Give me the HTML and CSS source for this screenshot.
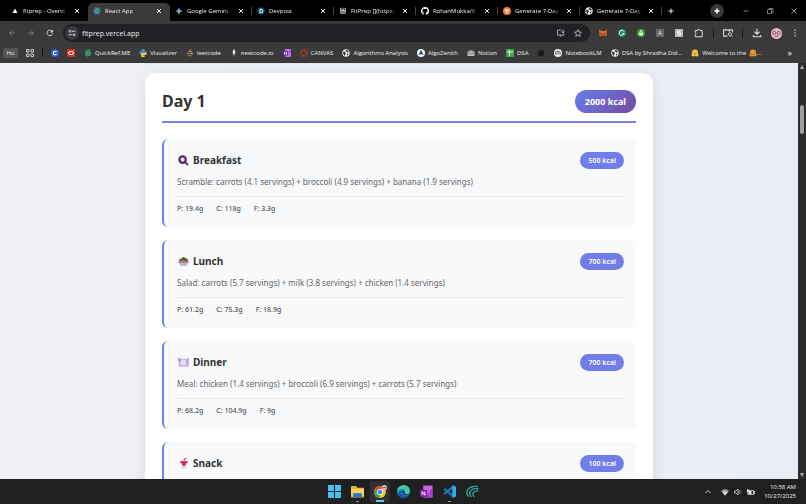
FILE: index.html
```html
<!DOCTYPE html>
<html lang="en">
<head>
    <meta charset="UTF-8">
    <meta name="viewport" content="width=device-width, initial-scale=1.0">
    <title>React App</title>
    <link rel="stylesheet" href="styles.css">
</head>
<body>
<!-- shared icons -->
<svg class="sprite" aria-hidden="true">
    <symbol id="close" viewBox="0 0 8 8"><path d="M2 2l4 4M6 2l-4 4" stroke="currentColor" stroke-width="1"/></symbol>
    <symbol id="globe" viewBox="0 0 16 16">
        <circle cx="8" cy="8" r="7.5" fill="#e4e6e8"/>
        <path d="M2 5l4 1 2 3-2 2v3l-3-3zM8 2l4 1 2 3-3 1-2-2-2 0z" fill="#303338"/><path d="M10 10l3-1-1 3-2 1z" fill="#303338"/>
    </symbol>
</svg>

<header class="browser">
    <nav class="tabs" aria-label="Tabs">
        <div class="tab">
            <svg class="icon" viewBox="0 0 16 16"><path d="M8 3l5 9H3z" fill="#fff"/></svg>
            <a href="#">fitprep - Overvi</a>
            <button aria-label="Close"><svg viewBox="0 0 8 8"><use href="#close"/></svg></button>
        </div>
        <div class="tab active">
            <svg class="icon" viewBox="0 0 16 16"><g fill="none" stroke="#59b8d2" stroke-width="1.1"><ellipse cx="8" cy="8" rx="7.2" ry="2.8"/><ellipse cx="8" cy="8" rx="7.2" ry="2.8" transform="rotate(60 8 8)"/><ellipse cx="8" cy="8" rx="7.2" ry="2.8" transform="rotate(120 8 8)"/></g><circle cx="8" cy="8" r="1.5" fill="#59b8d2"/></svg>
            <a href="#">React App</a>
            <button aria-label="Close"><svg viewBox="0 0 8 8"><use href="#close"/></svg></button>
        </div>
        <div class="tab">
            <svg class="icon" viewBox="0 0 16 16"><path d="M8 0c1 5 3 7 8 8H8z" fill="#4a8df0"/><path d="M8 0C7 5 5 7 0 8h8z" fill="#e8635a"/><path d="M0 8h8v8C7 11 5 9 0 8z" fill="#e5c344"/><path d="M8 8h8c-5 1-7 3-8 8z" fill="#53b56c"/><path d="M8 3c1 3 2 4 6 5-4 1-5 2-6 5-1-3-2-4-5-5 3-1 4-2 5-5z" fill="#6c9cf2"/></svg>
            <a href="#">Google Gemini</a>
            <button aria-label="Close"><svg viewBox="0 0 8 8"><use href="#close"/></svg></button>
        </div>
        <div class="tab">
            <svg class="icon" viewBox="0 0 16 16"><path d="M4 1h8l4 7-4 7H4L0 8z" fill="#1d4f6b"/><path d="M6 4.500h2a3.500 3.500 0 010 7H6z" fill="none" stroke="#fff" stroke-width="1.800"/></svg>
            <a href="#">Devpost</a>
            <button aria-label="Close"><svg viewBox="0 0 8 8"><use href="#close"/></svg></button>
        </div>
        <div class="tab">
            <svg class="icon" viewBox="0 0 16 16"><g fill="none" stroke="#c8c8c8" stroke-width="1.500"><path d="M3 2l5 4 5-4v5H3zM8 1v14M3 7h10v4l-5-4-5 4zM4 10v4l4-3 4 3v-4"/></g></svg>
            <a href="#">FitPrep [](https:</a>
            <button aria-label="Close"><svg viewBox="0 0 8 8"><use href="#close"/></svg></button>
        </div>
        <div class="tab">
            <svg class="icon" viewBox="0 0 16 16"><path fill="#fff" d="M8 0C3.580 0 0 3.580 0 8c0 3.540 2.290 6.530 5.470 7.590.4.070.55-.17.55-.38v-1.490c-2.230.49-2.700-.95-2.700-.95-.36-.92-.89-1.170-.89-1.170-.73-.5.050-.49.050-.49.8.060 1.230.83 1.230.83.72 1.230 1.880.87 2.340.67.070-.52.280-.87.510-1.070-1.780-.2-3.640-.89-3.640-3.950 0-.87.310-1.590.82-2.150-.08-.2-.36-1.020.08-2.120 0 0 .67-.21 2.200.82a7.600 7.600 0 014 0c1.530-1.040 2.200-.82 2.200-.82.44 1.100.16 1.920.08 2.120.51.56.82 1.270.82 2.150 0 3.070-1.870 3.750-3.650 3.950.29.25.54.73.54 1.480v2.190c0 .21.150.46.55.38A8 8 0 008 0z"/></svg>
            <a href="#">RohanMukka/fi</a>
            <button aria-label="Close"><svg viewBox="0 0 8 8"><use href="#close"/></svg></button>
        </div>
        <div class="tab">
            <svg class="icon" viewBox="0 0 16 16"><circle cx="8" cy="8" r="8" fill="#f07a3c"/><path d="M3 5h10l-2 2H9l-2 6H5l2-6H4zM10 9h2l-1 2H9z" fill="#fff"/></svg>
            <a href="#">Generate 7-Day</a>
            <button aria-label="Close"><svg viewBox="0 0 8 8"><use href="#close"/></svg></button>
        </div>
        <div class="tab">
            <svg class="icon"><use href="#globe"/></svg>
            <a href="#">Generate 7-Day</a>
            <button aria-label="Close"><svg viewBox="0 0 8 8"><use href="#close"/></svg></button>
        </div>
        <button class="new-tab" aria-label="New tab"><svg class="icon" viewBox="0 0 16 16"><path d="M8 3v10M3 8h10" stroke="#eee" stroke-width="2"/></svg></button>
        <div class="window-buttons">
            <button class="spark" aria-label="Assistant"><svg class="icon" viewBox="0 0 16 16"><path d="M8 1l2 5 5 2-5 2-2 5-2-5-5-2 5-2z" fill="#fff"/></svg></button>
            <button aria-label="Minimize"><svg class="icon" viewBox="0 0 16 16"><path d="M3 8h10" stroke="#aaa" stroke-width="1.500"/></svg></button>
            <button aria-label="Restore"><svg class="icon" viewBox="0 0 16 16"><path d="M3 5h8v8H3zM6 5V3h8v8h-3" fill="none" stroke="#999" stroke-width="1.500"/></svg></button>
            <button aria-label="Close window"><svg class="icon" viewBox="0 0 16 16"><path d="M3 3l10 10M13 3L3 13" stroke="#bbb" stroke-width="1.500"/></svg></button>
        </div>
    </nav>

    <div class="toolbar">
        <div class="nav-buttons">
            <button aria-label="Back"><svg class="icon" viewBox="0 0 16 16"><path d="M14 8H3M8 3L3 8l5 5" fill="none" stroke="#888" stroke-width="1.600"/></svg></button>
            <button aria-label="Forward"><svg class="icon" viewBox="0 0 16 16"><path d="M2 8h11M8 3l5 5-5 5" fill="none" stroke="#888" stroke-width="1.600"/></svg></button>
            <button aria-label="Reload"><svg class="icon" viewBox="0 0 16 16"><path d="M13 9a5.500 5.500 0 11-1.500-5L13 6" fill="none" stroke="#ddd" stroke-width="1.800"/><path d="M14 1v6H8z" fill="#ddd"/></svg></button>
        </div>
        <div class="address">
            <button class="site-info" aria-label="Site information"><svg class="icon" viewBox="0 0 16 16"><g fill="none" stroke="#ddd" stroke-width="1.800"><circle cx="4" cy="4.500" r="2"/><path d="M8 4.500h7M1 11.500h7"/><circle cx="12" cy="11.500" r="2"/></g></svg></button>
            <input type="text" aria-label="Address" value="fitprep.vercel.app">
            <button aria-label="Install app"><svg class="icon" viewBox="0 0 16 16"><path d="M8 2H1v10h13V9M5 14h5M12 1v6M9 5l3 3 3-3" fill="none" stroke="#ccc" stroke-width="1.500"/></svg></button>
            <button aria-label="Bookmark this tab"><svg class="icon" viewBox="0 0 16 16"><path d="M8 1l2 5 5 .5-4 3.500 1.500 5L8 12l-4.500 3L5 10 1 6.500 6 6z" fill="none" stroke="#ddd" stroke-width="1.400"/></svg></button>
        </div>
        <div class="extensions">
            <button aria-label="MetaMask"><svg class="icon" viewBox="0 0 16 16"><path d="M0 1l5 3h6l5-3-1 8 1 3-4 3-2-2H6l-2 2-4-3 1-3z" fill="#e36b2c"/><path d="M2 8l5 1v3l-2 1zM14 8L9 9v3l2 1z" fill="#8c3c1c"/></svg></button>
            <button aria-label="Grammarly"><svg class="icon" viewBox="0 0 16 16"><circle cx="8" cy="8" r="8" fill="#228a70"/><path d="M12 5a5 5 0 10.500 4H9" fill="none" stroke="#fff" stroke-width="1.800"/></svg></button>
            <button aria-label="Lemon"><svg class="icon" viewBox="0 0 16 16"><circle cx="8" cy="8" r="8" fill="#3fa447"/><path d="M4 7h8v4l-2 2H6l-2-2zM7 3l3-1-1 4H6z" fill="#e9f5dc"/></svg></button>
            <button class="letter-ext">A</button>
            <button aria-label="Simplify"><svg class="icon" viewBox="0 0 16 16"><path d="M0 0h16v16H0z" fill="#b9b9b9"/><path d="M11 4H6L5 8h6l-1 4H5" fill="none" stroke="#fff" stroke-width="2"/></svg></button>
            <button aria-label="Extensions"><svg class="icon wide" viewBox="0 0 16 16"><path d="M2 4h3.500a2 2 0 014 0H13v4a2 2 0 010 3v3H2v-3.500a2 2 0 000-3.500z" fill="none" stroke="#ddd" stroke-width="1.600"/></svg></button>
        </div>
        <span class="divider"></span>
        <button aria-label="Search side panel"><svg class="icon wide" viewBox="0 0 16 16"><path d="M7 13H1V3h14v4M10 3v3" fill="none" stroke="#ddd" stroke-width="1.700"/><circle cx="11" cy="10" r="2.500" fill="none" stroke="#ddd" stroke-width="1.500"/><path d="M13 12l2 2" stroke="#ddd" stroke-width="1.600"/></svg></button>
        <span class="divider"></span>
        <button aria-label="Downloads"><svg class="icon wide" viewBox="0 0 16 16"><path d="M8 1v9M4 6l4 4 4-4M2 11v3h12v-3" fill="none" stroke="#ddd" stroke-width="1.700"/></svg></button>
        <button class="profile" aria-label="Profile"><svg viewBox="0 0 20 20"><circle cx="10" cy="10" r="10" fill="#f0b8c8"/><g fill="none" stroke="#694651" stroke-width="1.500"><circle cx="6" cy="9" r="3"/><circle cx="14" cy="9" r="3"/><path d="M7 15h6"/></g></svg></button>
        <button aria-label="Menu"><svg class="icon" viewBox="0 0 16 16"><g fill="#ddd"><circle cx="8" cy="2.500" r="1.500"/><circle cx="8" cy="8" r="1.500"/><circle cx="8" cy="13.500" r="1.500"/></g></svg></button>
    </div>

    <nav class="bookmarks" aria-label="Bookmarks">
        <div class="pinned">
            <button class="group">Hu</button>
            <a href="#" aria-label="Apps"><svg class="icon" viewBox="0 0 16 16"><path d="M1 1h5v5H1zM10 1h5v5h-5zM1 10h5v5H1zM10 10h5v5h-5z" fill="none" stroke="#ccc" stroke-width="2"/></svg></a>
            <span class="divider"></span>
            <a href="#" aria-label="Coursera"><svg class="icon" viewBox="0 0 16 16"><circle cx="8" cy="8" r="8" fill="#345fdb"/><path d="M11 6a3.500 3.500 0 100 4" fill="none" stroke="#fff" stroke-width="2.200"/></svg></a>
            <a href="#" aria-label="Oracle"><svg class="icon" viewBox="0 0 16 16"><path d="M0 0h16v16H0z" fill="#d52b26"/><rect x="3" y="5" width="10" height="6" rx="3" fill="none" stroke="#fff" stroke-width="2"/></svg></a>
        </div>
        <a href="#"><svg class="icon" viewBox="0 0 16 16"><path d="M13 4A6 6 0 003 7c0 3 5 0 9-2M3 12a6 6 0 0010-3c0-3-5 0-9 2" fill="none" stroke="#2fa876" stroke-width="2.500"/></svg>QuickRef.ME</a>
        <a href="#"><svg class="icon" viewBox="0 0 16 16"><path d="M8 0c3 0 4 1 4 3v3c0 2-1 2-3 2H6c-2 0-3 1-3 3-3 0-3-7 0-7h5V3H4c0-2 1-3 4-3z" fill="#4b8bc4"/><path d="M8 16c-3 0-4-1-4-3v-3c0-2 1-2 3-2h3c2 0 3-1 3-3 3 0 3 7 0 7H8v1h4c0 2-1 3-4 3z" fill="#f4d048"/></svg>Visualizer</a>
        <a href="#"><svg class="icon" viewBox="0 0 16 16"><path d="M10 1L4 7c-1 1-1 3 0 4l2 2c1 1 3 1 4 0l2-2" fill="none" stroke="#d99b32" stroke-width="2"/><path d="M7 9h7M6 5l2-1 4 3" stroke="#aaa" stroke-width="1.800" fill="none"/></svg>leetcode</a>
        <a href="#"><svg class="icon" viewBox="0 0 16 16"><path d="M8 0c3 3 3 6 2 10H6C5 6 5 3 8 0z" fill="#dfe5ef"/><path d="M4 7l2 4H4zM12 7l-2 4h2z" fill="#4b77ba"/><path d="M6 11h4l-2 5z" fill="#eb7042"/></svg>neetcode.io</a>
        <a href="#" aria-label="OneNote"><svg class="icon" viewBox="0 0 16 16"><path d="M4 0h12v16H4z" fill="#c06be8"/><path d="M0 4h10v9H0z" fill="#7a28a8"/><path d="M3 11V6l4 5V6" fill="none" stroke="#fff" stroke-width="1.300"/><path d="M13 3h3v4h-3z" fill="#8b3bc1"/></svg></a>
        <a href="#"><svg class="icon" viewBox="0 0 16 16"><circle cx="8" cy="8" r="6.500" fill="none" stroke="#b5372b" stroke-width="3" stroke-dasharray="4 1"/><circle cx="8" cy="8" r="3" fill="none" stroke="#b5372b" stroke-width="1.300" stroke-dasharray="1.500 1"/></svg>CANVAS</a>
        <a href="#"><svg class="icon"><use href="#globe"/></svg>Algorithms Analysis</a>
        <a href="#"><svg class="icon" viewBox="0 0 16 16"><circle cx="8" cy="8" r="8" fill="#eef2f8"/><path d="M8 2l5 10-5-2-5 2z" fill="#254375"/></svg>AlgoZenith</a>
        <a href="#"><svg class="icon" viewBox="0 0 16 16"><path d="M5 5V2h6v3M1 5h14v9H1z" fill="#bbb"/><path d="M6 5V3h4v2M1 9h14" fill="none" stroke="#555" stroke-width="1"/></svg>Notion</a>
        <a href="#"><svg class="icon" viewBox="0 0 16 16"><path d="M0 0h16v16H0z" fill="#38a745"/><path d="M7 2v12M2 6h12" stroke="#fff" stroke-width="2"/></svg>DSA</a>
        <a href="#" aria-label="ChatGPT"><svg class="icon" viewBox="0 0 16 16"><circle cx="8" cy="8" r="7" fill="#222"/><path d="M4 7l4-3 4 3v3l-4 3-4-3z" fill="none" stroke="#111" stroke-width="1.500"/></svg></a>
        <a href="#"><svg class="icon" viewBox="0 0 16 16"><circle cx="8" cy="8" r="8" fill="#f0f0f0"/><path d="M3 11V9a5 5 0 0110 0v2M5.500 11v-1a2.500 2.500 0 015 0v1" fill="none" stroke="#222" stroke-width="1.300"/></svg>NotebookLM</a>
        <a href="#"><svg class="icon"><use href="#globe"/></svg>DSA by Shradha Did...</a>
        <a href="#"><svg class="icon" viewBox="0 0 16 16"><path d="M2 7a6 6 0 0112 0l1 7-4 1-3-1-3 1-4-1z" fill="#f5c431"/><path d="M5 7h1M10 7h1M6 10h4" stroke="#594216" stroke-width="1.500"/></svg>Welcome to the <span class="hug"><svg class="icon" viewBox="0 0 16 16"><path d="M2 7a6 6 0 0112 0l1 7-4 1-3-1-3 1-4-1z" fill="#e9982e"/><path d="M5 7h1M10 7h1M4 11h3M9 11h3" stroke="#704414" stroke-width="1.500"/></svg>...</span></a>
        <button class="more" aria-label="More bookmarks">»</button>
    </nav>
</header>

<div class="window">
    <main class="page">
        <div class="day-card previous"></div>
        <section class="day-card">
            <div class="day-header">
                <h2>Day 1</h2>
                <span class="day-total">2000 kcal</span>
            </div>
            <article class="meal">
                <div class="meal-header">
                    <h3><svg viewBox="0 0 24 24"><circle cx="10" cy="10" r="7" fill="#f2edf5" stroke="#51305d" stroke-width="5"/><path d="M7 10a3 3 0 013-3 3 3 0 013 3z" fill="#d8cadd"/><path d="M16 16l5 5" stroke="#51305d" stroke-width="4" stroke-linecap="round"/></svg>Breakfast</h3>
                    <span class="meal-kcal">500 kcal</span>
                </div>
                <p>Scramble: carrots (4.1 servings) + broccoli (4.9 servings) + banana (1.9 servings)</p>
                <div class="macros"><span>P: 19.4g</span><span>C: 118g</span><span>F: 3.3g</span></div>
            </article>
            <article class="meal">
                <div class="meal-header">
                    <h3><svg viewBox="0 0 24 24"><path d="M2 11c0-4 3-6 6-6 2-4 7-3 8 0 4-1 6 2 6 6z" fill="#598044"/><circle cx="8" cy="9" r="3" fill="#b74435"/><circle cx="17" cy="9" r="3" fill="#95452f"/><path d="M10 8l3-5 2 6z" fill="#354d2b"/><path d="M1 11h22c0 5-2 8-5 11H6c-3-3-5-6-5-11z" fill="#c6b5cd"/><path d="M1 11h22l-1 4H2z" fill="#9a86a1"/></svg>Lunch</h3>
                    <span class="meal-kcal">700 kcal</span>
                </div>
                <p>Salad: carrots (5.7 servings) + milk (3.8 servings) + chicken (1.4 servings)</p>
                <div class="macros"><span>P: 61.2g</span><span>C: 75.3g</span><span>F: 18.9g</span></div>
            </article>
            <article class="meal">
                <div class="meal-header">
                    <h3><svg viewBox="0 0 24 24"><rect x="4" y="4" width="17" height="17" rx="2" fill="#c9b4ee"/><circle cx="12" cy="12" r="6" fill="#e6daf9"/><path d="M1 2v5c0 2 4 2 4 0V2M3 2v20M22 2v20M22 3c-3 3-3 7 0 10" fill="none" stroke="#9b8bad" stroke-width="1.600"/></svg>Dinner</h3>
                    <span class="meal-kcal">700 kcal</span>
                </div>
                <p>Meal: chicken (1.4 servings) + broccoli (6.9 servings) + carrots (5.7 servings)</p>
                <div class="macros"><span>P: 68.2g</span><span>C: 104.9g</span><span>F: 9g</span></div>
            </article>
            <article class="meal">
                <div class="meal-header">
                    <h3><svg viewBox="0 0 24 24"><path d="M7 8h12l-3 15h-6z" fill="#dacbdc"/><path d="M8 11h10l-2 6h-6z" fill="#d13558"/><path d="M5 7h16v4H5z" fill="#cb2850"/><path d="M13 8l1-6 5-1" fill="none" stroke="#e34665" stroke-width="2.500"/></svg>Snack</h3>
                    <span class="meal-kcal">100 kcal</span>
                </div>
            </article>
        </section>
    </main>
    <div class="scrollbar" aria-hidden="true">
        <svg viewBox="0 0 8 8"><path d="M4 2l2 4H2z" fill="#aaa"/></svg>
        <span class="thumb"></span>
        <svg viewBox="0 0 8 8"><path d="M4 6l2-4H2z" fill="#aaa"/></svg>
    </div>
</div>

<footer class="taskbar">
    <div class="task-apps">
        <button aria-label="Start"><svg viewBox="0 0 24 24"><path d="M0 0h11v11H0zM13 0h11v11H13zM0 13h11v11H0zM13 13h11v11H13z" fill="#49bdf5"/></svg></button>
        <button class="running" aria-label="File Explorer"><svg viewBox="0 0 24 24"><path d="M0 2h9l3 3h12v18H0z" fill="#e7aa2c"/><path d="M0 7h24v13H0z" fill="#fbd264"/><path d="M4 15h16v8H4z" fill="#2879bb"/></svg></button>
        <button class="running current" aria-label="Chrome"><svg viewBox="0 0 24 24"><circle cx="11" cy="13" r="11" fill="#f2c52c"/><path d="M1.500 7.500a11 11 0 0119 0L11 8l-4 7z" fill="#dd4638"/><path d="M1.500 7.500L7 16l4 3-1 5A11 11 0 011.500 7.500z" fill="#31a452"/><circle cx="11" cy="13" r="5.500" fill="#fff"/><circle cx="11" cy="13" r="4.300" fill="#4285e8"/><circle cx="19" cy="5" r="5" fill="#eeb9c7"/><path d="M15 5h8" stroke="#7a515d" stroke-width="2"/></svg></button>
        <button aria-label="Edge"><svg viewBox="0 0 24 24"><circle cx="12" cy="12" r="12" fill="#1687cf"/><path d="M0 11C2-2 22-4 24 10c0 7-7 8-10 5 4-6-4-11-14-4z" fill="#46c8a1"/><path d="M9 11c-3 5 2 11 12 9-7 7-19 4-18-5 1-3 4-4 6-4z" fill="#1457a5"/><path d="M10 11c3-1 5 1 4 4 2 3 6 3 9 1-3 5-13 3-13-5z" fill="#202020"/></svg></button>
        <button aria-label="OneNote"><svg viewBox="0 0 24 24"><path d="M6 1h17v22H6z" fill="#ca64e6"/><path d="M18 8h5v7h-5z" fill="#9f3fc4"/><path d="M6 15h17v8H6z" fill="#a844cc"/><path d="M0 9h13v13H0z" fill="#7822a0"/><path d="M4 19v-7l5 7v-7" fill="none" stroke="#fff" stroke-width="1.700"/></svg></button>
        <button class="running" aria-label="Visual Studio Code"><svg viewBox="0 0 24 24"><path d="M18 4L2 17M18 20L2 7" stroke="#1979bd" stroke-width="4"/><path d="M17 0l7 3v18l-7 3z" fill="#36a7ed"/></svg></button>
        <button aria-label="Shell"><svg viewBox="0 0 24 24"><g fill="none" stroke="#2aa7a0" stroke-width="2.500"><path d="M5 22C-3 12 4 0 22 3"/><path d="M10 22C3 14 8 5 23 7"/><path d="M15 22c-5-6-1-12 8-11"/></g></svg></button>
    </div>
    <div class="tray">
        <svg class="icon" viewBox="0 0 16 16"><path d="M3 10l5-5 5 5" fill="none" stroke="#ddd" stroke-width="1.800"/></svg>
        <svg class="icon wifi" viewBox="0 0 16 16"><path d="M0 6c5-5 11-5 16 0l-8 9z" fill="#999"/><path d="M3 9c3-3 7-3 10 0l-5 6z" fill="#ddd"/></svg>
        <svg class="icon" viewBox="0 0 16 16"><path d="M1 6h3l4-4v12l-4-4H1z" fill="none" stroke="#ddd" stroke-width="1.500"/><path d="M10 5c2 2 2 4 0 6" fill="none" stroke="#ddd" stroke-width="1.500"/><path d="M12 3c4 3 4 7 0 10" fill="none" stroke="#666" stroke-width="1.500"/></svg>
        <svg class="icon" viewBox="0 0 16 16"><path d="M2 5h11v8H2zM14 7h2v4h-2z" fill="none" stroke="#ddd" stroke-width="1.600"/><path d="M3 6h6v6H3zM0 2h3v7H0z" fill="#ddd"/></svg>
        <time datetime="2025-10-27T10:58">10:58 AM<br>10/27/2025</time>
    </div>
</footer>
</body>
</html>
```

FILE: styles.css
```css
* {
    box-sizing: border-box;
}

body {
    margin: 0;
    height: 100vh;
    display: flex;
    flex-direction: column;
    overflow: hidden;
    font-family: 'Noto Sans', sans-serif;
    background-color: #202020;
}

button {
    display: flex;
    align-items: center;
    justify-content: center;
    padding: 0;
    border: none;
    background: none;
    color: #eee;
    font: inherit;
    cursor: pointer;
}

a {
    color: inherit;
    text-decoration: none;
}

svg {
    display: block;
    flex: none;
}

.sprite {
    position: absolute;
    width: 0;
    height: 0;
}

.icon {
    width: 8px;
    height: 8px;
}

.icon.wide {
    width: 10px;
    height: 10px;
}

.divider {
    width: 1px;
    height: 9px;
    background-color: #151515;
}

/* Browser */
.browser {
    flex: none;
    background-color: #3a3a3a;
    color: #f0f0f0;
    font-family: 'Open Sans', sans-serif;
    font-size: 6px;
}

.tabs {
    display: flex;
    height: 21px;
    padding-left: 6px;
    background-color: #000;
}

.tab {
    display: flex;
    align-items: center;
    gap: 4px;
    width: 82px;
    padding: 0 7px 0 5px;
    background: linear-gradient(#444, #444) right center / 1px 8px no-repeat;
}

.tab:first-child,
.tab.active {
    background: none;
}

.tab.active {
    align-self: flex-end;
    height: 18px;
    padding-bottom: 3px;
    border-radius: 5px 5px 0 0;
    background-color: #3a3a3a;
}

.tab a {
    flex: 1;
    white-space: nowrap;
    -webkit-mask-image: linear-gradient(to right, #000 80%, transparent);
    mask-image: linear-gradient(to right, #000 80%, transparent);
}

.tab button svg {
    width: 8px;
    height: 8px;
}

.new-tab {
    width: 18px;
}

.window-buttons {
    display: flex;
    align-items: center;
    gap: 16px;
    margin-left: auto;
    padding-right: 8px;
}

.window-buttons .spark {
    width: 14px;
    height: 14px;
    margin-right: 2px;
    border-radius: 50%;
    background-color: #383838;
}

.toolbar {
    display: flex;
    align-items: center;
    gap: 9px;
    height: 24px;
    padding: 0 7px 0 8px;
}

.nav-buttons {
    display: flex;
    gap: 11px;
}

.address {
    display: flex;
    align-items: center;
    flex: 1;
    gap: 9px;
    height: 18px;
    padding: 0 8px 0 2px;
    border-radius: 9px;
    background-color: #202124;
}

.address .site-info {
    width: 14px;
    height: 14px;
    border-radius: 50%;
    background-color: #38393c;
}

.address input {
    flex: 1;
    min-width: 0;
    margin-left: -6px;
    padding: 0;
    border: none;
    outline: none;
    background: none;
    color: #eee;
    font-family: inherit;
    font-size: 7px;
}

.extensions {
    display: flex;
    align-items: center;
    gap: 11px;
}

.letter-ext {
    width: 8px;
    height: 8px;
    background-color: #686868;
}

.profile svg {
    width: 11px;
    height: 11px;
}

.bookmarks,
.pinned {
    display: flex;
    align-items: center;
}

.bookmarks {
    gap: 9px;
    height: 18px;
    padding: 0 14px 3px 3px;
    white-space: nowrap;
}

.pinned {
    gap: 8px;
}

.bookmarks a {
    display: flex;
    align-items: center;
    gap: 3px;
}

.bookmarks .hug {
    display: flex;
    align-items: center;
}

.bookmarks .group {
    width: 15px;
    height: 10px;
    border-radius: 2px;
    background-color: #555;
}

.bookmarks .more {
    margin-left: auto;
    font-size: 9px;
}

/* Page */
.window {
    display: flex;
    flex: 1;
    min-height: 0;
}

.page {
    flex: 1;
    overflow: hidden;
    padding: 0 24px;
    background: linear-gradient(to right, #eff1f6, #e9edf6);
}

.day-card {
    max-width: 508px;
    margin: 0 auto;
    padding: 17px;
    border-radius: 10px;
    background-color: #fff;
    box-shadow: 0 4px 14px rgba(0, 0, 0, 0.1);
}

.day-card.previous {
    height: 1px;
    margin-bottom: 9px;
    padding: 0;
    border-radius: 0;
    background-color: #e2e4ea;
}

.day-header {
    display: flex;
    align-items: center;
    justify-content: space-between;
    margin-bottom: 16px;
    padding-bottom: 8px;
    border-bottom: 2px solid #7783e5;
}

.day-header h2 {
    margin: 0;
    color: #333;
    font-size: 16px;
    line-height: 23px;
}

.day-total {
    padding: 0 10px;
    border-radius: 12px;
    background: linear-gradient(135deg, #667eea, #764ba2);
    color: #fff;
    font-size: 9px;
    font-weight: bold;
    line-height: 23px;
}

.meal {
    margin-bottom: 13px;
    padding: 13px 12px 12px 13px;
    border-left: 2px solid #6f7fea;
    border-radius: 6px;
    background-color: #f8f9fb;
}

.meal:last-child {
    min-height: 88px;
}

.meal-header {
    display: flex;
    align-items: center;
    justify-content: space-between;
}

.meal h3 {
    display: flex;
    align-items: center;
    gap: 4px;
    margin: 0;
    padding-left: 1px;
    color: #333;
    font-size: 10px;
    line-height: 17px;
}

.meal h3 svg {
    width: 11px;
    height: 11px;
}

.meal-kcal {
    padding: 0 8px;
    border-radius: 9px;
    background-color: #717eea;
    color: #fff;
    font-size: 7px;
    font-weight: 600;
    line-height: 17px;
}

.meal p {
    margin: 6px 0 7px;
    color: #666;
    font-size: 8px;
    line-height: 14px;
}

.macros {
    display: flex;
    gap: 13px;
    padding-top: 6px;
    border-top: 1px solid #e6e8ec;
    color: #555;
    font-size: 7px;
    font-weight: 500;
    line-height: 12px;
}

.scrollbar {
    display: flex;
    flex-direction: column;
    align-items: center;
    width: 8px;
    background-color: #2c2c2c;
}

.scrollbar svg {
    width: 8px;
    height: 8px;
}

.scrollbar .thumb {
    width: 4px;
    height: 29px;
    margin: 34px 0 auto;
    border-radius: 2px;
    background-color: #9f9f9f;
}

/* Taskbar */
.taskbar {
    display: grid;
    grid-template-columns: 1fr auto 1fr;
    flex: none;
    height: 25px;
    background-color: #202020;
    color: #f0f0f0;
}

.task-apps {
    display: flex;
    align-items: center;
    grid-column: 2;
    gap: 3px;
}

.task-apps button {
    width: 20px;
    height: 21px;
    border-radius: 3px;
}

.task-apps svg {
    width: 13px;
    height: 13px;
}

.task-apps .running {
    background: linear-gradient(#999, #999) center bottom / 3px 1px no-repeat;
}

.task-apps .current {
    background: linear-gradient(#67c4ef, #67c4ef) center bottom / 8px 2px no-repeat #303030;
}

.tray {
    display: flex;
    align-items: center;
    justify-content: flex-end;
    gap: 5px;
    padding-right: 10px;
}

.tray .wifi {
    margin-left: 4px;
}

.tray time {
    margin-left: 4px;
    font-family: 'Open Sans', sans-serif;
    font-size: 6px;
    line-height: 9px;
    text-align: right;
}
```
